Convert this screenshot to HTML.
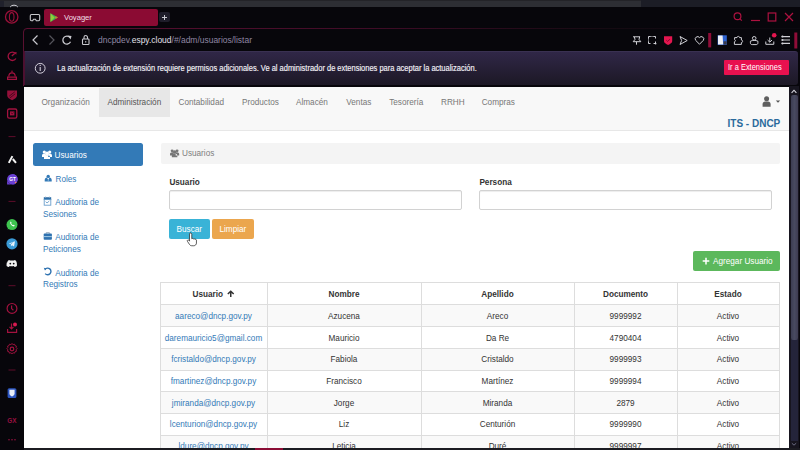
<!DOCTYPE html>
<html><head><meta charset="utf-8">
<style>
*{margin:0;padding:0;box-sizing:border-box}
html,body{width:800px;height:450px;overflow:hidden;background:#07060b;font-family:"Liberation Sans",sans-serif}
.a{position:absolute}
svg{position:absolute;overflow:visible}
.t{position:absolute;white-space:nowrap;line-height:1}
/* page */
#page{position:absolute;left:24px;top:87px;width:765px;height:361px;background:#fff;overflow:hidden}
.nav{position:absolute;left:0;top:0;width:765px;height:44px;background:#f8f8f8;border-bottom:1px solid #e7e7e7}
.nav .it{position:absolute;top:1px;height:30px;line-height:30px;font-size:8.2px;color:#777}
.side .it{position:absolute;font-size:8.2px;color:#337ab7;line-height:11.7px}
.lbl{position:absolute;font-size:8.2px;font-weight:bold;color:#333}
.inp{position:absolute;height:20px;border:1px solid #d2d2d2;border-radius:2px;background:#fff;box-shadow:inset 0 1px 1px rgba(0,0,0,.075)}
.btn{position:absolute;height:20px;line-height:22px;font-size:8.2px;color:#fff;text-align:center;border-radius:2px}
.tc{position:absolute;text-align:center;font-size:8.2px;color:#333;padding-top:7.5px;line-height:9px;white-space:nowrap}
.tc.th{font-weight:bold;padding-top:6.6px}
.tc.u{color:#337ab7}
</style></head>
<body>
<!-- top strip -->
<div class="a" style="left:0;top:0;width:641px;height:7px;background:#2d2e34"></div>
<div class="a" style="left:641px;top:0;width:159px;height:7px;background:#1c1d26"></div>
<div class="a" style="left:0;top:0;width:4px;height:7px;background:#20212c"></div>
<div class="a" style="left:0;top:0;width:641px;height:1px;background:#232328"></div>

<div class="a" style="left:159px;top:12.3px;width:10.6px;height:10.2px;background:#1e1d2a;border-radius:2px"></div>
<div class="a" style="left:44px;top:9px;width:114px;height:17px;background:#8b0b33;border-radius:2px"></div>
<svg width="800" height="450" style="left:0;top:0" viewBox="0 0 800 450">
 <!-- white arc in top strip -->
 <path d="M10.2 7a4.2 3.2 0 0 1 7.6 0" fill="none" stroke="#d0d0d6" stroke-width="1"/>
 <!-- opera logo -->
 <ellipse cx="11.7" cy="16.9" rx="6.2" ry="6.2" fill="none" stroke="#9a1039" stroke-width="1.3"/>
 <ellipse cx="11.7" cy="16.9" rx="2.3" ry="4.3" fill="none" stroke="#9a1039" stroke-width="1.1"/>
 <!-- workspace icon -->
 <g fill="none" stroke="#c8c8cc" stroke-width="1.1">
  <path d="M31.5 14.5h7c0.8 0 1.2 0.4 1.2 1.2v3.8c0 0.8-0.4 1.2-1.2 1.2h-2.2l-0.8-1.5h-2l-0.8 1.5h-1.2c-0.8 0-1.2-0.4-1.2-1.2v-3.8c0-0.8 0.4-1.2 1.2-1.2z"/>
 </g>
 <!-- play icon -->
 <path d="M50.5 13.2 L58 17.6 L50.5 22 Z" fill="#3fb64f"/>
 <path d="M50.5 13.2 L54.5 17.6 L50.5 22 Z" fill="#8fcf3a"/>
 <path d="M54.5 17.6 L58 17.6 L56 16.4 Z" fill="#f4b400"/>
 <path d="M54.5 17.6 L56 18.8 L58 17.6 Z" fill="#e8543a"/>
 <!-- plus -->
 <path d="M164.5 15v5 M162 17.5h5" stroke="#c8c8d0" stroke-width="1"/>
 <!-- window controls -->
 <g fill="none" stroke="#ad1240" stroke-width="1.2">
  <circle cx="737.5" cy="16.3" r="3.4"/><path d="M740 18.8l1.8 1.8"/>
  <path d="M751 20.5h9"/>
  <rect x="768.2" y="13" width="7.6" height="8"/>
  <path d="M785 13l8 8 M793 13l-8 8"/>
 </g>
 <!-- address frame border (fading) -->
 <defs>
  <linearGradient id="fb" x1="0" x2="1" y1="0" y2="0">
   <stop offset="0" stop-color="#5e1032"/><stop offset="0.45" stop-color="#400c27"/><stop offset="0.75" stop-color="#150a12"/><stop offset="1" stop-color="#0a090f"/>
  </linearGradient>
 </defs>
 <path d="M23.5 86V32a3.5 3.5 0 0 1 3.5-3.5H800" fill="none" stroke="url(#fb)" stroke-width="1"/>
 <path d="M23.5 86V450" stroke="#060509" stroke-width="1"/>
 <path d="M23.5 32V85.5" stroke="#5a1030" stroke-width="1"/>
 <!-- nav arrows -->
 <path d="M37.5 35.5 L33 40 L37.5 44.5" fill="none" stroke="#c9c9cf" stroke-width="1.2"/>
 <path d="M49.5 35.5 L54 40 L49.5 44.5" fill="none" stroke="#55555c" stroke-width="1.2"/>
 <path d="M70 37.6 A4 4 0 1 0 70.5 41.8" fill="none" stroke="#c9c9cf" stroke-width="1.3"/>
 <path d="M67.6 35.4 L71.5 36 L70.6 39.6 Z" fill="#c9c9cf"/>
 <!-- lock -->
 <rect x="82.5" y="39" width="6.5" height="5.5" rx="0.8" fill="none" stroke="#c9c9cf" stroke-width="1.1"/>
 <path d="M84 39V37.3a1.75 1.75 0 0 1 3.5 0V39" fill="none" stroke="#c9c9cf" stroke-width="1.1"/>
 <path d="M85.75 41v1.6" stroke="#c9c9cf" stroke-width="1"/>
 <!-- toolbar icons -->
 <g fill="none" stroke="#d0d0d6" stroke-width="1">
  <path d="M633 36.8h7 M634.3 36.8l0.7 2.6-1.8 2.3h7.6l-1.8-2.3 0.7-2.6 M636.5 41.7v3"/>
  <path d="M648.5 38.5v-2h2 M653.5 36.5h2v2 M655.5 41.5v2h-2 M650.5 43.5h-2v-2" />
  <path d="M650.5 36.5h3 M648.5 38.5v3" stroke-dasharray="1 1"/>
  <path d="M680 36.5l7.2 4-7.2 4 1.6-4z"/>
  <path d="M699.5 44.2l-3.8-3.8a2.3 2.3 0 0 1 3.8-2.8a2.3 2.3 0 0 1 3.8 2.8z"/>
  <path d="M734.4 44.4v-2.6c1.2-0.2 1.4-1.6 0.2-2.2v-2h2.4c-0.2-1.6 2.8-1.6 2.6 0h1.8v2.4c1.6-0.2 1.6 2.8 0 2.6v1.8z"/>
  <circle cx="754.2" cy="38.3" r="1.8"/><path d="M750.4 41.2v1.6c0 1.2 0.6 1.8 1.8 1.8h3.9c1.2 0 1.8-0.6 1.8-1.8v-1.6c-1.2-0.6-2.4-0.8-3.75-0.8s-2.55 0.2-3.75 0.8z"/>
  <path d="M769.8 37.5v4.5 M767.6 40l2.2 2.2 2.2-2.2 M765.8 41.5v2.8h8v-2.8"/>
 </g>
 <circle cx="655.6" cy="43.6" r="0.9" fill="#d0d0d6"/>
 <path d="M664 36.3h8.2v5c0 1.6-2 2.8-4.1 3.6c-2.1-0.8-4.1-2-4.1-3.6z" fill="#e3164f"/>
 <path d="M666.3 40.2l1.3 1.2 2.4-2.2" fill="none" stroke="#7a0a2a" stroke-width="0.9"/>
 <rect x="708.2" y="33" width="3" height="14.4" fill="#8f0d38"/>
 <!-- extension icon -->
 <rect x="717.6" y="35.3" width="9.2" height="9.6" fill="#2e63d0"/>
 <path d="M718 35.6h4.6l0.6 8.9h-5.2z" fill="#eef1f8"/>
 <rect x="723.6" y="41.3" width="3" height="3.2" fill="#3a3a46"/>
 <!-- menu -->
 <g stroke="#d0d0d6" stroke-width="1.1">
  <path d="M781.5 36.6h8.5 M781.5 40h8.5 M781.5 43.4h8.5"/>
 </g>
 <g fill="#d0d0d6"><circle cx="782.5" cy="36.6" r="1"/><circle cx="782.5" cy="40" r="1"/><circle cx="782.5" cy="43.4" r="1"/></g>
 <circle cx="774.2" cy="35.2" r="2.3" fill="#e3164f"/>
 <rect x="794.3" y="32.5" width="3" height="16" fill="#8f0d38"/>

 <!-- sidebar icons -->
 <g fill="none" stroke="#a3123f" stroke-width="1.3">
  <path d="M15.5 53.5 A4.2 4.2 0 1 0 15.9 58.5"/>
  <path d="M11.8 56l2.8-2.6"/>
 </g>
 <path d="M14 52.6l2.6-0.6-0.3 2.8z" fill="#a3123f"/>
 <g fill="none" stroke="#a3123f" stroke-width="1.2">
  <path d="M8.8 76.6c0-2.3 1.4-3.8 3.2-3.8s3.2 1.5 3.2 3.8"/>
  <path d="M7.6 77.2h8.8v2.2h-8.8z"/>
 </g>
 <rect x="11.4" y="70.6" width="1.2" height="1.8" fill="#a3123f"/>
 <path d="M7.2 90.6h9.8v5c0 2-2.4 3.6-4.9 4.6c-2.5-1-4.9-2.6-4.9-4.6z" fill="#94103a"/>
 <path d="M9.2 96.2l5.6-4.4 M9.8 98l5.4-4.2" stroke="#40081a" stroke-width="0.9"/>
 <rect x="7.6" y="109" width="9.2" height="9.2" rx="1.6" fill="none" stroke="#a3123f" stroke-width="1.3"/>
 <path d="M10 111.4h4.4v4h-4.4z" fill="#a3123f"/>
 <path d="M10.8 112.6l1.4 1.2 1.4-1.2" stroke="#3a0616" stroke-width="0.7" fill="none"/>
 <!-- separators -->
 <g stroke="#5e0d2a" stroke-width="1">
  <path d="M8.5 136.6h7 M8.5 201.4h7 M8.5 285.7h7 M8.5 370h7"/>
 </g>
 <!-- aria -->
 <path d="M8.8 162.9l3.6-6.8 M12.8 159l3.2 3.9" fill="none" stroke="#f2f2f2" stroke-width="2"/>
 <!-- chatgpt bubble -->
 <path d="M12.4 173.9a5.3 5.3 0 1 1 -5.3 5.3v5.3h5.3" fill="#6a40d4"/>
 <circle cx="12.4" cy="179.2" r="5.3" fill="#6a40d4"/>
 <text x="9.2" y="181.2" font-size="4.8" font-family="Liberation Sans" font-weight="bold" fill="#fff">GT</text>
 <circle cx="15.6" cy="182.5" r="0.8" fill="#ff8050"/>
 <!-- whatsapp -->
 <circle cx="12" cy="224.6" r="5.5" fill="#3ec34f"/>
 <path d="M7.6 229.6l0.8-3 2.4 1.6z" fill="#3ec34f"/>
 <path d="M10.2 222.2c-0.4 1.6 1.6 4 3.8 4.2l0.8-0.8-1.2-0.8-0.6 0.4c-0.8-0.4-1.4-1-1.8-1.8l0.4-0.6-0.8-1.2z" fill="#fff"/>
 <!-- telegram -->
 <circle cx="12" cy="243.8" r="5.6" fill="#3a9ad6"/>
 <path d="M8.8 243.6l6.2-2.4-1 5.4-2-1.4-1 1 -0.2-1.8 2.6-2.4-3.2 2z" fill="#e8f2fa"/>
 <!-- discord -->
 <path d="M7.2 262.4c0.4-1.4 1-2.2 2.2-2.4l0.4 0.6c1.4-0.3 2.9-0.3 4.3 0l0.4-0.6c1.2 0.2 1.8 1 2.2 2.4c0.3 1.2 0.3 2.4 0.2 3.6c-0.8 0.6-1.6 0.9-2.4 1l-0.6-0.9c-1.4 0.3-2.9 0.3-4.3 0l-0.6 0.9c-0.8-0.1-1.6-0.4-2.4-1c-0.1-1.2-0.1-2.4 0.2-3.6z" fill="#f0f0f0"/>
 <circle cx="10.3" cy="263.6" r="0.9" fill="#0a090f"/><circle cx="13.7" cy="263.6" r="0.9" fill="#0a090f"/>
 <!-- clock -->
 <g fill="none" stroke="#a3123f" stroke-width="1.2">
  <circle cx="12" cy="308.4" r="4.9"/>
  <path d="M11.6 305.6v3l1.8 1.6"/>
 </g>
 <!-- download-ish -->
 <g fill="none" stroke="#a3123f" stroke-width="1.2">
  <path d="M11.5 323.5v5 M9.5 326.8l2 2 2-2 M7.6 329v3.4h9v-3.4"/>
 </g>
 <circle cx="15" cy="324.6" r="2" fill="#d81a50"/>
 <!-- gear -->
 <g fill="none" stroke="#a3123f" stroke-width="1.2">
  <path d="M12 342l1.4 1.3 1.9-0.4 0.6 1.8 1.8 0.6-0.4 1.9 1.3 1.4-1.3 1.4 0.4 1.9-1.8 0.6-0.6 1.8-1.9-0.4-1.4 1.3-1.4-1.3-1.9 0.4-0.6-1.8-1.8-0.6 0.4-1.9-1.3-1.4 1.3-1.4-0.4-1.9 1.8-0.6 0.6-1.8 1.9 0.4z" transform="translate(12 349) scale(0.78) translate(-12 -349)"/>
  <circle cx="12" cy="349" r="1.8"/>
 </g>
 <!-- bitwarden -->
 <rect x="7.6" y="388.2" width="8.8" height="9.8" rx="1.5" fill="#2c55c0"/>
 <path d="M9.4 389.8h5.2v3.6c0 1.4-1.2 2.4-2.6 3.2c-1.4-0.8-2.6-1.8-2.6-3.2z" fill="#e8edf8"/>
 <!-- GX -->
 <text x="7.2" y="422.6" font-size="6.4" font-family="Liberation Sans" font-weight="bold" fill="#9a1040">GX</text>
 <g fill="#9a1040"><circle cx="9" cy="439.8" r="0.8"/><circle cx="12" cy="439.8" r="0.8"/><circle cx="15" cy="439.8" r="0.8"/></g>
</svg>
<div class="t" style="left:64px;top:13.5px;font-size:7.6px;color:#f2dfe6">Voyager</div>
<div class="t" style="left:97.5px;top:35.5px;font-size:9.3px;color:#8f86a3;transform:scaleX(0.91);transform-origin:0 0">dncpdev.<span style="color:#e3e0ea">espy.cloud</span>/#/adm/usuarios/listar</div>

<!-- notification bar -->
<div class="a" style="left:24px;top:50.5px;width:773.5px;height:34.5px;background:linear-gradient(#302747,#1c1825);border-top:1px solid #3a3152;border-radius:0 3px 3px 0"></div>
<div class="a" style="left:23px;top:50.5px;width:2px;height:34.5px;background:#4c1030"></div>
<svg width="800" height="90" style="left:0;top:0" viewBox="0 0 800 90">
 <circle cx="40.2" cy="68.3" r="4.9" fill="none" stroke="#d4d0dc" stroke-width="1"/>
 <path d="M40.2 67v4" stroke="#d4d0dc" stroke-width="1.1"/><circle cx="40.2" cy="65.4" r="0.65" fill="#d4d0dc"/>
</svg>
<div class="t" style="left:57px;top:64.7px;font-size:8.2px;color:#f4f2f8;-webkit-text-stroke:0.15px #f4f2f8;transform:scaleX(0.914);transform-origin:0 0">La actualización de extensión requiere permisos adicionales. Ve al administrador de extensiones para aceptar la actualización.</div>
<div class="a" style="left:724px;top:60px;width:65.3px;height:14.7px;background:#e8114f;border-radius:1px"></div>
<div class="t" style="left:728.2px;top:64.1px;font-size:8.2px;color:#fff;transform:scaleX(0.914);transform-origin:0 0">Ir a Extensiones</div>

<!-- scrollbar -->
<div class="a" style="left:789px;top:86px;width:10px;height:362px;background:#17151f"></div>
<div class="a" style="left:798.5px;top:86px;width:1.5px;height:364px;background:#08070c"></div>
<div class="a" style="left:791px;top:339px;width:6.6px;height:102px;background:#24243a"></div>
<div class="a" style="left:791px;top:95px;width:6.6px;height:244.5px;background:linear-gradient(90deg,#3c3d52,#484a60 50%,#3e3c52);border-radius:2px"></div>
<svg width="800" height="450" style="left:0;top:0" viewBox="0 0 800 450">
 <path d="M791.6 92.8l2.4-2.6 2.4 2.6" fill="none" stroke="#d8d8e0" stroke-width="1.1"/>
 <path d="M791.8 443.2l2.2 2 2.2-2" fill="none" stroke="#6a6a80" stroke-width="1"/>
</svg>

<!-- PAGE -->
<div class="a" style="left:24px;top:448px;width:776px;height:2px;background:#1c1c22"></div>
<div class="a" style="left:255px;top:448px;width:28px;height:2px;background:#8a0c34;z-index:5"></div>
<div id="page">
 <div class="nav">
  <div class="a" style="left:75px;top:1px;width:71px;height:28.5px;background:#e7e7e7"></div>
  <div class="it" style="left:17.5px">Organización</div>
  <div class="it" style="left:83.5px;color:#555">Administración</div>
  <div class="it" style="left:154.5px">Contabilidad</div>
  <div class="it" style="left:218px">Productos</div>
  <div class="it" style="left:272px">Almacén</div>
  <div class="it" style="left:322.3px">Ventas</div>
  <div class="it" style="left:365.2px">Tesorería</div>
  <div class="it" style="left:417px">RRHH</div>
  <div class="it" style="left:457.7px">Compras</div>
  <svg width="800" height="40" style="left:0;top:0" viewBox="0 0 800 40">
   <circle cx="742.6" cy="11.8" r="2.5" fill="#5f5f5f"/>
   <path d="M738.6 19.8v-2.6c0-1.6 1.2-2.7 2.6-2.7h2.8c1.4 0 2.6 1.1 2.6 2.7v2.6z" fill="#5f5f5f"/>
   <path d="M751.8 13.6h4.4l-2.2 2.2z" fill="#555"/>
  </svg>
  <div class="t" style="left:703.5px;top:32px;font-size:10px;font-weight:bold;color:#2a6a9c">ITS - DNCP</div>
 </div>
 <div class="a" style="left:9px;top:56px;width:110px;height:23px;background:#337ab7;border-radius:2.5px"></div>
 <svg width="10" height="9" style="left:18px;top:63px" viewBox="0 0 10 9">
  <g fill="#fff"><circle cx="2.3" cy="2" r="1.6"/><circle cx="7.7" cy="2" r="1.6"/><circle cx="5" cy="3.3" r="1.9"/>
  <path d="M0 7v-1.5c0-1.2 1-2 2.3-2s1.5 0.5 1.5 0.5v3z M10 7v-1.5c0-1.2-1-2-2.3-2s-1.5 0.5-1.5 0.5v3z M2 9v-1.8c0-1.5 1.3-2.3 3-2.3s3 0.8 3 2.3v1.8z"/></g>
 </svg>
 <div class="t" style="left:30.6px;top:64.9px;font-size:8.2px;color:#fff">Usuarios</div>
 <div class="side">
  <svg width="800" height="400" style="left:0;top:0" viewBox="0 0 800 400"><g fill="#337ab7"><circle cx="24.2" cy="89.4" r="1.7"/><path d="M20.7 94.6v-1.6c0-1.3 1-2.2 2.2-2.4l1.3 2.4 1.3-2.4c1.2 0.2 2.2 1.1 2.2 2.4v1.6z"/></g><path d="M24.2 91.4l-0.5 2.6 0.5 0.5 0.5-0.5z" fill="#9cc0e0"/></svg>
  <div class="it" style="left:31.5px;top:87px">Roles</div>
  <svg width="800" height="400" style="left:0;top:0" viewBox="0 0 800 400"><rect x="19.8" y="110.2" width="7.4" height="2.8" fill="#2f6fa8"/><rect x="20.2" y="112.6" width="6.6" height="5.6" fill="none" stroke="#6b9fcc" stroke-width="0.9"/><path d="M21.7 114.6l1.3 1.4 2.3-2" fill="none" stroke="#6b9fcc" stroke-width="0.9"/><path d="M21.6 109.6v1.4 M25.4 109.6v1.4" stroke="#8aa8c4" stroke-width="0.9"/></svg>
  <div class="it" style="left:31.3px;top:110.2px">Auditoria de</div>
  <div class="it" style="left:19px;top:122px">Sesiones</div>
  <svg width="800" height="400" style="left:0;top:0" viewBox="0 0 800 400"><path d="M22.2 146.8v-1.2h3.2v1.2" fill="none" stroke="#9aabbc" stroke-width="0.9"/><rect x="19.7" y="146.6" width="8.2" height="6.1" rx="0.8" fill="#2f72b0"/><path d="M19.7 149.6h8.2" stroke="#bfe0f0" stroke-width="0.8"/></svg>
  <div class="it" style="left:31.3px;top:145.2px">Auditoria de</div>
  <div class="it" style="left:19px;top:157.2px">Peticiones</div>
  <svg width="800" height="400" style="left:0;top:0" viewBox="0 0 800 400"><path d="M21 182.4 A3.3 3.3 0 1 1 21.2 186.6" fill="none" stroke="#2f72b0" stroke-width="1.4"/><path d="M19.8 180.8l2.8 0.6-1.6 2z" fill="#2f72b0"/></svg>
  <div class="it" style="left:31.3px;top:180.5px">Auditoria de</div>
  <div class="it" style="left:19px;top:192.2px">Registros</div>
 </div>
 <div class="a" style="left:136.5px;top:56px;width:619.5px;height:20.5px;background:#f4f4f4;border-radius:2px"></div>
 <svg width="9.2" height="8.3" style="left:146px;top:62.2px" viewBox="0 0 10 9">
  <g fill="#777"><circle cx="2.3" cy="2" r="1.6"/><circle cx="7.7" cy="2" r="1.6"/><circle cx="5" cy="3.3" r="1.9"/>
  <path d="M0 7v-1.5c0-1.2 1-2 2.3-2s1.5 0.5 1.5 0.5v3z M10 7v-1.5c0-1.2-1-2-2.3-2s-1.5 0.5-1.5 0.5v3z M2 9v-1.8c0-1.5 1.3-2.3 3-2.3s3 0.8 3 2.3v1.8z"/></g>
 </svg>
 <div class="t" style="left:158px;top:63px;font-size:8.2px;color:#7e7e7e">Usuarios</div>
 <div class="lbl t" style="left:145.4px;top:91.5px">Usuario</div>
 <div class="lbl t" style="left:455.4px;top:91.5px">Persona</div>
 <div class="inp" style="left:145px;top:103.2px;width:292.8px"></div>
 <div class="inp" style="left:455px;top:103.2px;width:292.5px"></div>
 <div class="btn" style="left:145px;top:132.1px;width:40.6px;background:#39b3d7">Buscar</div>
 <div class="btn" style="left:187.9px;top:132.1px;width:42.1px;background:#eba64e">Limpiar</div>
 <svg width="12.6" height="14.4" style="left:162.9px;top:144.5px" viewBox="0 0 14 16">
  <path d="M4 1.2c0.8 0 1.3 0.5 1.3 1.3v5l0.5-0.3c0.6-0.3 1.3 0 1.5 0.5c0.6-0.4 1.4-0.1 1.6 0.5c0.7-0.3 1.5 0.1 1.6 0.8v3.3c0 1.6-1.3 3-3 3h-2.3c-1 0-1.8-0.5-2.3-1.3l-2.4-3.6c-0.4-0.6-0.2-1.3 0.4-1.5c0.5-0.2 1 0 1.3 0.4l0.6 0.9v-7.9c0-0.8 0.5-1.3 1.2-1.3z" fill="#fff" stroke="#222" stroke-width="0.8"/>
 </svg>
 <div class="a" style="left:669px;top:164px;width:87px;height:19.5px;background:#5cb85c;border-radius:2px"></div>
 <svg width="10" height="10" style="left:676.5px;top:168.6px" viewBox="0 0 10 10"><path d="M5 1.8v6.6 M1.7 5.1h6.6" stroke="#fff" stroke-width="1.5"/></svg>
 <div class="t" style="left:689px;top:170.6px;font-size:8.2px;color:#fff">Agregar Usuario</div>
<div class="a" style="left:0;top:0;width:765px;height:361px">
<div class="a" style="left:136px;top:217.0px;width:619px;height:22.0px;background:#f9f9f9"></div>
<div class="a" style="left:136px;top:261.0px;width:619px;height:21.8px;background:#f9f9f9"></div>
<div class="a" style="left:136px;top:304.2px;width:619px;height:22px;background:#f9f9f9"></div>
<div class="a" style="left:136px;top:347.9px;width:619px;height:21.7px;background:#f9f9f9"></div>
<div class="a" style="left:136px;top:195.0px;width:620px;height:1px;background:#ddd"></div>
<div class="a" style="left:136px;top:217.0px;width:620px;height:1px;background:#ddd"></div>
<div class="a" style="left:136px;top:239.0px;width:620px;height:1px;background:#ddd"></div>
<div class="a" style="left:136px;top:261.0px;width:620px;height:1px;background:#ddd"></div>
<div class="a" style="left:136px;top:282.8px;width:620px;height:1px;background:#ddd"></div>
<div class="a" style="left:136px;top:304.2px;width:620px;height:1px;background:#ddd"></div>
<div class="a" style="left:136px;top:326.2px;width:620px;height:1px;background:#ddd"></div>
<div class="a" style="left:136px;top:347.9px;width:620px;height:1px;background:#ddd"></div>
<div class="a" style="left:136px;top:369.6px;width:620px;height:1px;background:#ddd"></div>
<div class="a" style="left:136px;top:195px;width:1px;height:174.6px;background:#ddd"></div>
<div class="a" style="left:243px;top:195px;width:1px;height:174.6px;background:#ddd"></div>
<div class="a" style="left:397px;top:195px;width:1px;height:174.6px;background:#ddd"></div>
<div class="a" style="left:550px;top:195px;width:1px;height:174.6px;background:#ddd"></div>
<div class="a" style="left:653px;top:195px;width:1px;height:174.6px;background:#ddd"></div>
<div class="a" style="left:755px;top:195px;width:1px;height:174.6px;background:#ddd"></div>
<div class="tc th" style="left:136px;top:196px;width:107px;height:21px">Usuario<svg style="position:relative;display:inline-block;vertical-align:-0.5px;margin-left:4px" width="7.5" height="7" viewBox="0 0 7.5 7"><path d="M3.75 0.2L0.3 3.6l1 1 1.7-1.7v4h1.5v-4l1.7 1.7 1-1z" fill="#333"/></svg></div>
<div class="tc th" style="left:243px;top:196px;width:154px;height:21px">Nombre</div>
<div class="tc th" style="left:397px;top:196px;width:153px;height:21px">Apellido</div>
<div class="tc th" style="left:550px;top:196px;width:103px;height:21px">Documento</div>
<div class="tc th" style="left:653px;top:196px;width:102px;height:21px">Estado</div>
<div class="tc u" style="left:136px;top:217.0px;width:107px;height:22.0px">aareco@dncp.gov.py</div>
<div class="tc" style="left:243px;top:217.0px;width:154px;height:22.0px">Azucena</div>
<div class="tc" style="left:397px;top:217.0px;width:153px;height:22.0px">Areco</div>
<div class="tc" style="left:550px;top:217.0px;width:103px;height:22.0px">9999992</div>
<div class="tc" style="left:653px;top:217.0px;width:102px;height:22.0px">Activo</div>
<div class="tc u" style="left:136px;top:239.0px;width:107px;height:22.0px">daremauricio5@gmail.com</div>
<div class="tc" style="left:243px;top:239.0px;width:154px;height:22.0px">Mauricio</div>
<div class="tc" style="left:397px;top:239.0px;width:153px;height:22.0px">Da Re</div>
<div class="tc" style="left:550px;top:239.0px;width:103px;height:22.0px">4790404</div>
<div class="tc" style="left:653px;top:239.0px;width:102px;height:22.0px">Activo</div>
<div class="tc u" style="left:136px;top:261.0px;width:107px;height:21.8px;padding-top:6.6px">fcristaldo@dncp.gov.py</div>
<div class="tc" style="left:243px;top:261.0px;width:154px;height:21.8px;padding-top:6.6px">Fabiola</div>
<div class="tc" style="left:397px;top:261.0px;width:153px;height:21.8px;padding-top:6.6px">Cristaldo</div>
<div class="tc" style="left:550px;top:261.0px;width:103px;height:21.8px;padding-top:6.6px">9999993</div>
<div class="tc" style="left:653px;top:261.0px;width:102px;height:21.8px;padding-top:6.6px">Activo</div>
<div class="tc u" style="left:136px;top:282.8px;width:107px;height:21.7px">fmartinez@dncp.gov.py</div>
<div class="tc" style="left:243px;top:282.8px;width:154px;height:21.7px">Francisco</div>
<div class="tc" style="left:397px;top:282.8px;width:153px;height:21.7px">Martínez</div>
<div class="tc" style="left:550px;top:282.8px;width:103px;height:21.7px">9999994</div>
<div class="tc" style="left:653px;top:282.8px;width:102px;height:21.7px">Activo</div>
<div class="tc u" style="left:136px;top:304.5px;width:107px;height:21.7px">jmiranda@dncp.gov.py</div>
<div class="tc" style="left:243px;top:304.5px;width:154px;height:21.7px">Jorge</div>
<div class="tc" style="left:397px;top:304.5px;width:153px;height:21.7px">Miranda</div>
<div class="tc" style="left:550px;top:304.5px;width:103px;height:21.7px">2879</div>
<div class="tc" style="left:653px;top:304.5px;width:102px;height:21.7px">Activo</div>
<div class="tc u" style="left:136px;top:326.2px;width:107px;height:21.7px;padding-top:6.9px">lcenturion@dncp.gov.py</div>
<div class="tc" style="left:243px;top:326.2px;width:154px;height:21.7px;padding-top:6.9px">Liz</div>
<div class="tc" style="left:397px;top:326.2px;width:153px;height:21.7px;padding-top:6.9px">Centurión</div>
<div class="tc" style="left:550px;top:326.2px;width:103px;height:21.7px;padding-top:6.9px">9999990</div>
<div class="tc" style="left:653px;top:326.2px;width:102px;height:21.7px;padding-top:6.9px">Activo</div>
<div class="tc u" style="left:136px;top:347.9px;width:107px;height:21.7px">ldure@dncp.gov.py</div>
<div class="tc" style="left:243px;top:347.9px;width:154px;height:21.7px">Leticia</div>
<div class="tc" style="left:397px;top:347.9px;width:153px;height:21.7px">Duré</div>
<div class="tc" style="left:550px;top:347.9px;width:103px;height:21.7px">9999997</div>
<div class="tc" style="left:653px;top:347.9px;width:102px;height:21.7px">Activo</div>
</div>
</div>
</body></html>
